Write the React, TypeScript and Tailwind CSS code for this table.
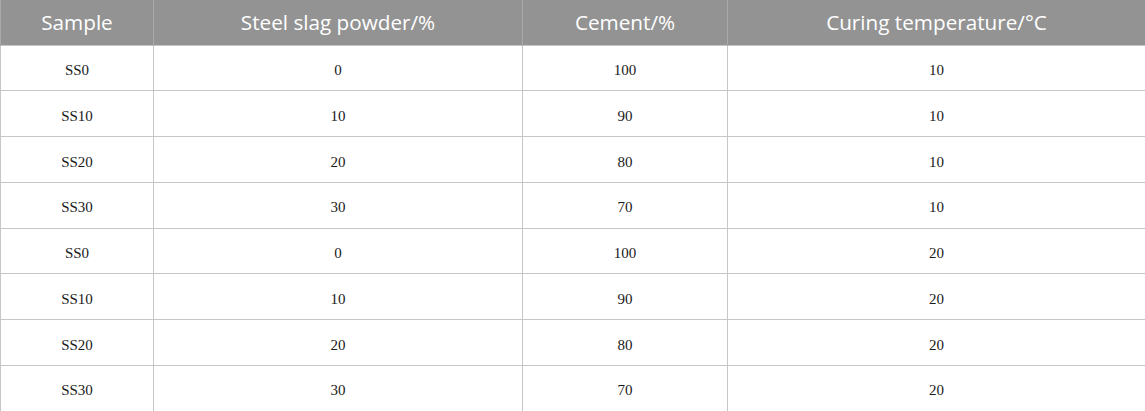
import React from 'react';

const rows = [
  ['SS0', '0', '100', '10'],
  ['SS10', '10', '90', '10'],
  ['SS20', '20', '80', '10'],
  ['SS30', '30', '70', '10'],
  ['SS0', '0', '100', '20'],
  ['SS10', '10', '90', '20'],
  ['SS20', '20', '80', '20'],
  ['SS30', '30', '70', '20'],
];

const headers = ['Sample', 'Steel slag powder/%', 'Cement/%', 'Curing temperature/°C'];

export default function App() {
  return (
    <div className="w-[1145px] h-[411px] bg-white overflow-hidden">
      <table className="w-[1145px] table-fixed border-collapse">
        <colgroup>
          <col className="w-[153px]" />
          <col className="w-[369px]" />
          <col className="w-[205px]" />
          <col className="w-[418px]" />
        </colgroup>
        <thead>
          <tr className="h-[45px] bg-[#939393]">
            {headers.map((h) => (
              <th
                key={h}
                className="border-x border-[#a8a8a8] p-0 text-center align-middle font-normal text-[20.7px] text-white font-['Open_Sans',sans-serif]"
              >
                {h}
              </th>
            ))}
          </tr>
        </thead>
        <tbody>
          {rows.map((r, i) => (
            <tr key={i} className="h-[45.75px]">
              {r.map((c, j) => (
                <td
                  key={j}
                  className="border border-[#c6c6c6] p-0 pt-[5px] text-center align-middle text-[15px] text-[#1a1a1a] font-['Liberation_Serif',serif]"
                >
                  {c}
                </td>
              ))}
            </tr>
          ))}
        </tbody>
      </table>
    </div>
  );
}
